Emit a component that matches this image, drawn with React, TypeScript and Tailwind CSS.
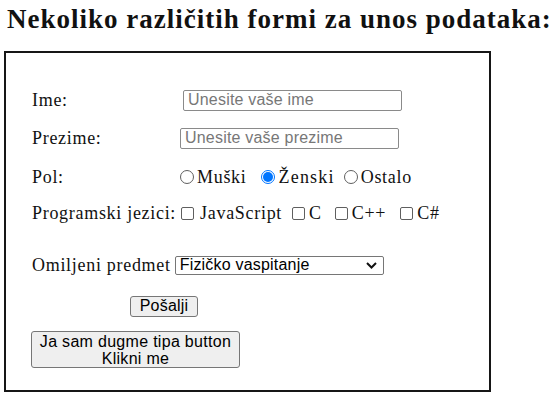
import { useState } from "react";

const serif = "font-['Liberation_Serif',serif]";
const sans = "font-['Liberation_Sans',Arial,sans-serif]";

function Radio({ checked, onClick }: { checked: boolean; onClick: () => void }) {
  return (
    <span
      onClick={onClick}
      className={`inline-flex w-[14px] h-[14px] rounded-full border items-center justify-center cursor-pointer ${
        checked ? "border-[#0075ff]" : "border-[#5f5f5f]"
      }`}
    >
      {checked && <span className="w-[10px] h-[10px] rounded-full bg-[#0075ff]" />}
    </span>
  );
}

function Box() {
  return <span className="inline-block w-[13px] h-[13px] border border-[#5f5f5f] rounded-[2px]" />;
}

export default function App() {
  const [pol, setPol] = useState("z");

  return (
    <div className={`w-[560px] h-[407px] bg-white text-[#111] ${serif}`}>
      <h1 className="pl-[7px] pt-[4px] text-[27px] tracking-[1px] font-bold leading-[30px]">
        Nekoliko različitih formi za unos podataka:
      </h1>

      <div className="ml-[4px] mt-[17px] w-[487px] h-[341px] border-[2px] border-[#161616] pl-[26px] pt-[36px] text-[18px] tracking-[0.7px]">
        <div className="flex items-center h-[22px]">
          <span className="w-[151px]">Ime:</span>
          <div className={`w-[219px] h-[21px] border border-[#8a8a8a] rounded-[2px] px-[4px] flex items-center text-[16px] tracking-[0.2px] text-[#777] ${sans}`}>
            Unesite vaše ime
          </div>
        </div>

        <div className="flex items-center h-[22px] mt-[16px]">
          <span className="w-[148px]">Prezime:</span>
          <div className={`w-[219px] h-[21px] border border-[#8a8a8a] rounded-[2px] px-[4px] flex items-center text-[16px] tracking-[0.2px] text-[#777] ${sans}`}>
            Unesite vaše prezime
          </div>
        </div>

        <div className="flex items-center h-[22px] mt-[17px]">
          <span className="w-[148px]">Pol:</span>
          <Radio checked={pol === "m"} onClick={() => setPol("m")} />
          <span className="ml-[3px]">Muški</span>
          <span className="ml-[14px] flex"><Radio checked={pol === "z"} onClick={() => setPol("z")} /></span>
          <span className="ml-[4px] tracking-[1.2px]">Ženski</span>
          <span className="ml-[9px] flex"><Radio checked={pol === "o"} onClick={() => setPol("o")} /></span>
          <span className="ml-[3px]">Ostalo</span>
        </div>

        <div className="flex items-center h-[22px] mt-[14px]">
          <span>Programski jezici:</span>
          <span className="ml-[5px] flex"><Box /></span>
          <span className="ml-[6px]">JavaScript</span>
          <span className="ml-[10px] flex"><Box /></span>
          <span className="ml-[4px]">C</span>
          <span className="ml-[13px] flex"><Box /></span>
          <span className="ml-[4px]">C++</span>
          <span className="ml-[14px] flex"><Box /></span>
          <span className="ml-[4px]">C#</span>
        </div>

        <div className="flex items-center h-[22px] mt-[30px]">
          <span>Omiljeni predmet</span>
          <div className={`ml-[4px] w-[209px] h-[19px] border border-[#767676] rounded-[2px] pl-[4px] pr-[6px] flex items-center justify-between text-[16px] tracking-[0.2px] text-black ${sans}`}>
            <span>Fizičko vaspitanje</span>
            <svg width="11" height="7" viewBox="0 0 11 7">
              <path d="M1 1l4.5 4.5L10 1" fill="none" stroke="#111" strokeWidth="2" />
            </svg>
          </div>
        </div>

        <div className="mt-[16px] h-[22px] pl-[98px]">
          <button className={`h-[21px] w-[68px] bg-[#efefef] border border-[#767676] rounded-[3px] text-[16px] tracking-[0.2px] leading-none text-black ${sans}`}>
            Pošalji
          </button>
        </div>

        <div className="mt-[17px] -ml-[1px]">
          <button className={`w-[209px] h-[37px] bg-[#efefef] border border-[#767676] rounded-[3px] text-[16px] tracking-[0.3px] leading-[17px] text-black ${sans}`}>
            Ja sam dugme tipa button
            <br />
            Klikni me
          </button>
        </div>
      </div>
    </div>
  );
}
